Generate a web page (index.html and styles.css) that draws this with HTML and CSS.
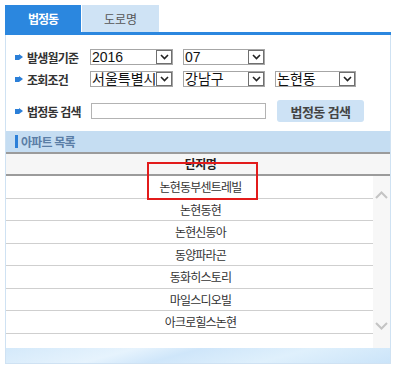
FILE: index.html
```html
<!DOCTYPE html>
<html lang="ko">
<head>
    <meta charset="UTF-8">
    <title>아파트 목록</title>
    <link rel="stylesheet" href="styles.css">
</head>
<body>

<div class="wrap">
    <div class="tabs">
        <div class="tab on">법정동</div>
        <div class="tab">도로명</div>
    </div>

    <div class="panel">
        <div class="search">
            <div class="row">
                <span class="label"><i class="bullet"></i>발생월기준</span>
                <div class="sel w83">2016<span class="arr"></span></div>
                <div class="sel w82">07<span class="arr"></span></div>
            </div>
            <div class="row">
                <span class="label"><i class="bullet"></i>조회조건</span>
                <div class="sel w83">서울특별시<span class="arr"></span></div>
                <div class="sel w82">강남구<span class="arr"></span></div>
                <div class="sel w81">논현동<span class="arr"></span></div>
            </div>
            <div class="row row-search">
                <span class="label"><i class="bullet"></i>법정동 검색</span>
                <input type="text" class="keyword">
                <button class="search-btn">법정동 검색</button>
            </div>
        </div>

        <div class="sec-title"><i class="bar"></i>아파트 목록</div>

        <div class="grid">
            <div class="grid-head">단지명</div>
            <div class="grid-body">
                <div class="list">
                    <div class="item">논현동부센트레빌</div>
                    <div class="item">논현동현</div>
                    <div class="item">논현신동아</div>
                    <div class="item">동양파라곤</div>
                    <div class="item">동화히스토리</div>
                    <div class="item">마일스디오빌</div>
                    <div class="item">아크로힐스논현</div>
                </div>
                <div class="scroll">
                    <svg width="13" height="8" viewBox="0 0 13 8"><path d="M1 7 L6.5 1.5 L12 7" fill="none" stroke="#c4c4c4" stroke-width="2"/></svg>
                    <svg width="13" height="8" viewBox="0 0 13 8"><path d="M1 1 L6.5 6.5 L12 1" fill="none" stroke="#c4c4c4" stroke-width="2"/></svg>
                </div>
            </div>
        </div>

        <div class="foot"></div>
    </div>

    <div class="mark"></div>
</div>

</body>
</html>
```

FILE: styles.css
```css
* {
    margin: 0;
    padding: 0;
    box-sizing: border-box;
}

body {
    font-family: "Noto Sans CJK KR", "Liberation Sans", sans-serif;
    font-size: 12px;
    color: #333;
    background-color: #fff;
    padding: 5px 0 0 5px;
}

.wrap {
    position: relative;
    width: 386px;
}

.tabs {
    display: flex;
    gap: 1px;
    height: 30px;
    border-bottom: 3px solid #2b87df;
}

.tab {
    width: 76px;
    height: 27px;
    line-height: 27px;
    text-align: center;
    background-color: #cfe3f5;
    color: #555;
    font-size: 12px;
}

.tab + .tab {
    width: 77px;
}

.tab.on {
    background-color: #2b87df;
    color: #fff;
    font-weight: bold;
    letter-spacing: -1px;
}

.panel {
    border: 1px solid #cfe2f3;
    border-top: none;
}

.search {
    padding: 14px 0 9px 9px;
    display: flex;
    flex-direction: column;
    gap: 6px;
}

.row {
    display: flex;
    align-items: center;
    gap: 10px;
    height: 16px;
}

.row-search {
    height: 22px;
    margin-top: 7px;
}

.label {
    display: flex;
    align-items: center;
    flex-shrink: 0;
    width: 65px;
    font-weight: bold;
    font-size: 12px;
    color: #333;
    white-space: nowrap;
    letter-spacing: -0.8px;
}

.bullet {
    position: relative;
    flex-shrink: 0;
    display: inline-block;
    width: 4px;
    height: 5px;
    background-color: #2b7fd8;
    margin-right: 8px;
}

.bullet::after {
    content: "";
    position: absolute;
    left: 4px;
    top: -1px;
    border-left: 4px solid #2b7fd8;
    border-top: 3.5px solid transparent;
    border-bottom: 3.5px solid transparent;
}

.sel {
    position: relative;
    flex-shrink: 0;
    height: 16px;
    line-height: 14px;
    border: 1px solid #a6a6a6;
    padding-left: 1px;
    font-family: "Liberation Sans", "Noto Sans CJK KR", sans-serif;
    font-size: 14px;
    color: #111;
    background: #fff;
    white-space: nowrap;
    overflow: hidden;
}

.w83 { width: 83px; }
.w82 { width: 82px; }
.w81 { width: 81px; }

.arr {
    position: absolute;
    right: 0;
    top: 0;
    width: 16px;
    height: 14px;
    border-left: 1px solid #8c8c8c;
    background: #fff url("data:image/svg+xml,%3Csvg xmlns='http://www.w3.org/2000/svg' width='9' height='6'%3E%3Cpath d='M1 1 L4.5 4.5 L8 1' fill='none' stroke='%23222' stroke-width='1.6'/%3E%3C/svg%3E") no-repeat center;
    outline: 1px solid #6f6f6f;
    outline-offset: -1px;
}

.keyword {
    flex-shrink: 0;
    width: 175px;
    height: 16px;
    border: 1px solid #b3b3b3;
    margin-left: 1px;
}

.search-btn {
    flex-shrink: 0;
    width: 87px;
    height: 22px;
    margin-left: 1px;
    border: none;
    border-radius: 3px;
    background-color: #cde2f5;
    color: #444;
    font-family: "Noto Sans CJK KR", sans-serif;
    font-size: 13px;
    font-weight: bold;
    letter-spacing: -0.6px;
}

.sec-title {
    display: flex;
    align-items: center;
    height: 21px;
    padding-left: 9px;
    background-color: #c5ddf2;
    color: #5a7ea6;
    font-size: 12px;
    font-weight: bold;
    letter-spacing: -0.8px;
}

.bar {
    display: inline-block;
    width: 3px;
    height: 13px;
    background-color: #2b7fd8;
    margin-right: 3px;
}

.grid-head {
    height: 24px;
    line-height: 20px;
    border-top: 2px solid #9b9b9b;
    border-bottom: 2px solid #9b9b9b;
    background-color: #f6f6f6;
    text-align: center;
    padding-left: 5px;
    font-weight: bold;
    color: #222;
    letter-spacing: -0.6px;
}

.grid-body {
    display: flex;
    height: 172px;
}

.list {
    flex: 1;
}

.item {
    height: 22.5px;
    line-height: 21px;
    border-bottom: 1px solid #cfcfcf;
    text-align: center;
    padding-left: 22px;
    color: #333;
    letter-spacing: -0.8px;
}

.scroll {
    width: 17px;
    background-color: #f7f7f7;
    display: flex;
    flex-direction: column;
    justify-content: space-between;
    align-items: center;
    padding: 15px 0 18px;
}

.foot {
    height: 15px;
    background: linear-gradient(165deg, #d4e9fa 0%, #e6f3fd 30%, #cfe6fa 45%, #dff0fc 70%, #cbe4f9 100%);
}

.mark {
    position: absolute;
    left: 142px;
    top: 157px;
    width: 111px;
    height: 38px;
    border: 2px solid #e21b1b;
}
```
